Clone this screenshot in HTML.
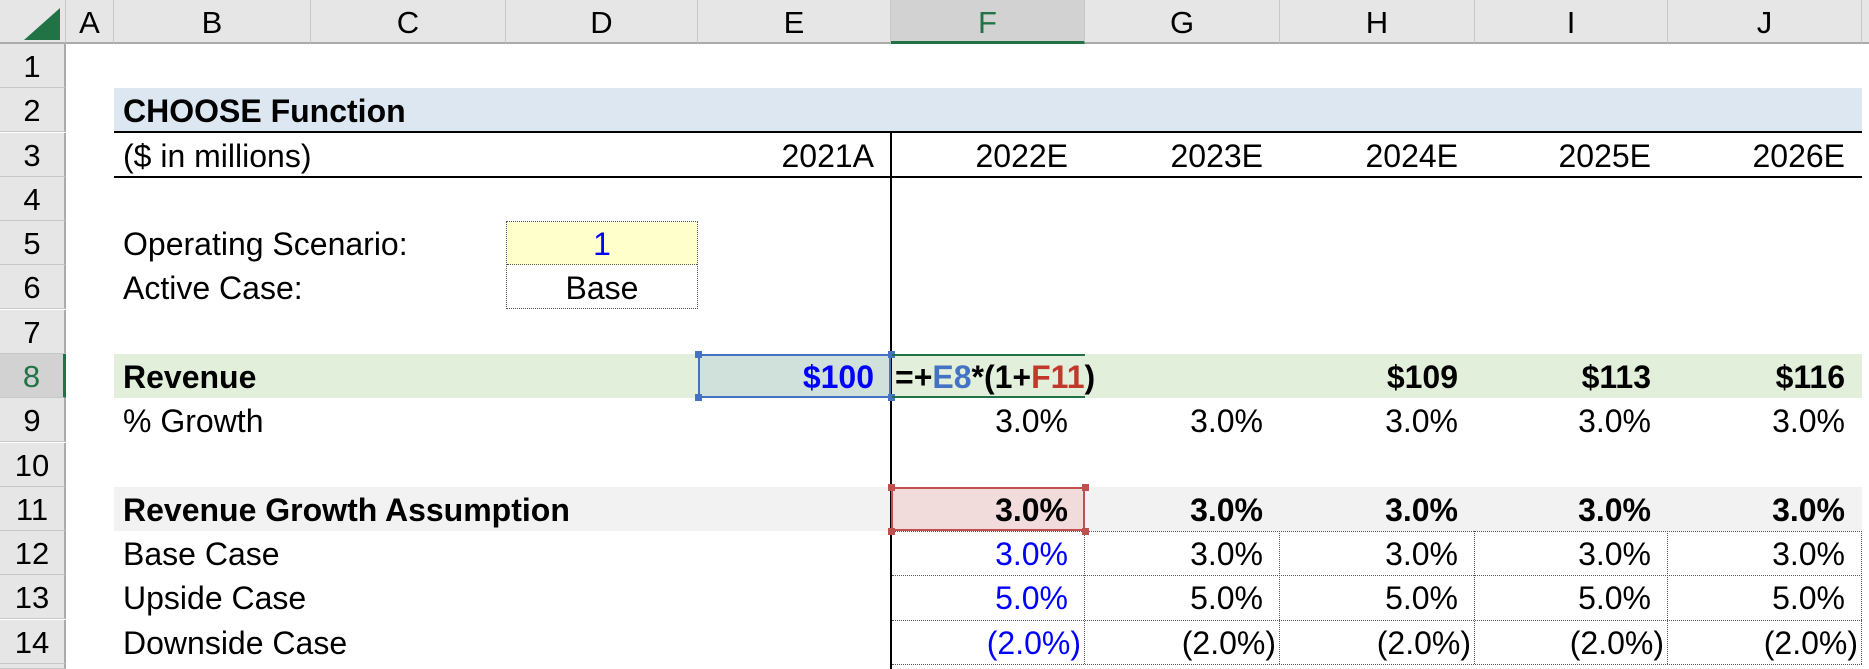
<!DOCTYPE html>
<html><head><meta charset="utf-8"><style>
*{margin:0;padding:0;box-sizing:border-box}
html,body{width:1869px;height:669px;overflow:hidden}
body{background:#fff;position:relative;font-family:"Liberation Sans",Arial,sans-serif;color:#000}
.a{position:absolute}
.t{position:absolute;height:44px;line-height:47px;font-size:32px;white-space:nowrap;overflow:visible}
.r{text-align:right;padding-right:17px}
.rp{text-align:right;padding-right:4px}
.b{font-weight:bold}
.bl{color:#0000ff}
.hd{position:absolute;top:0;height:44px;line-height:46px;font-size:31px;text-align:center;background:#e6e6e6;border-right:1px solid #c8c8c8;border-bottom:2px solid #ababab}
.rh{position:absolute;left:0;width:66px;height:44px;line-height:46px;font-size:31px;text-align:center;background:#e6e6e6;border-bottom:1px solid #c8c8c8;border-right:2px solid #ababab}
.h{position:absolute;width:7px;height:7px}
</style></head><body>
<div class="hd" style="left:0;width:66px"></div>
<svg class="a" style="left:10px;top:6px" width="52" height="36"><polygon points="50,2 50,34 14,34" fill="#217346"/></svg>
<div class="hd" style="left:66px;width:48px">A</div>
<div class="hd" style="left:114px;width:197px">B</div>
<div class="hd" style="left:311px;width:195px">C</div>
<div class="hd" style="left:506px;width:192px">D</div>
<div class="hd" style="left:698px;width:193px">E</div>
<div class="hd" style="left:891px;width:194px;background:#d2d2d2;color:#217346;border-bottom:3px solid #217346">F</div>
<div class="hd" style="left:1085px;width:195px">G</div>
<div class="hd" style="left:1280px;width:195px">H</div>
<div class="hd" style="left:1475px;width:193px">I</div>
<div class="hd" style="left:1668px;width:194px">J</div>
<div class="hd" style="left:1862px;width:7px;border-right:none"></div>
<div class="rh" style="top:44px">1</div>
<div class="rh" style="top:88px">2</div>
<div class="rh" style="top:133px">3</div>
<div class="rh" style="top:177px">4</div>
<div class="rh" style="top:221px">5</div>
<div class="rh" style="top:265px">6</div>
<div class="rh" style="top:310px">7</div>
<div class="rh" style="top:354px;background:#d2d2d2;color:#217346;border-right:3px solid #217346">8</div>
<div class="rh" style="top:398px">9</div>
<div class="rh" style="top:443px">10</div>
<div class="rh" style="top:487px">11</div>
<div class="rh" style="top:531px">12</div>
<div class="rh" style="top:575px">13</div>
<div class="rh" style="top:620px">14</div>
<div class="rh" style="top:664px;height:5px"></div>

<div class="a" style="left:114px;top:88px;width:1748px;height:45px;background:#dde7f1;border-bottom:2px solid #000"></div>
<div class="a" style="left:114px;top:176px;width:1748px;height:2px;background:#000"></div>
<div class="a" style="left:114px;top:354px;width:1748px;height:44px;background:#e2efda"></div>
<div class="a" style="left:114px;top:487px;width:1748px;height:44px;background:#f2f2f2"></div>
<div class="a" style="left:890px;top:133px;width:2px;height:536px;background:#000"></div>

<div class="a" style="left:506px;top:221px;width:192px;height:88px;border:1px dotted #555"></div>
<div class="a" style="left:507px;top:222px;width:190px;height:43px;background:#ffffcc;border-bottom:1px dotted #555"></div>

<div class="a" style="left:892px;top:531px;width:970px;height:1px;border-top:1px dotted #555"></div>
<div class="a" style="left:892px;top:575px;width:970px;height:1px;border-top:1px dotted #555"></div>
<div class="a" style="left:892px;top:620px;width:970px;height:1px;border-top:1px dotted #555"></div>
<div class="a" style="left:892px;top:664px;width:970px;height:1px;border-top:1px dotted #555"></div>
<div class="a" style="left:1084px;top:531px;width:1px;height:133px;border-left:1px dotted #555"></div>
<div class="a" style="left:1279px;top:531px;width:1px;height:133px;border-left:1px dotted #555"></div>
<div class="a" style="left:1474px;top:531px;width:1px;height:133px;border-left:1px dotted #555"></div>
<div class="a" style="left:1667px;top:531px;width:1px;height:133px;border-left:1px dotted #555"></div>
<div class="a" style="left:1861px;top:531px;width:1px;height:133px;border-left:1px dotted #555"></div>

<div class="a" style="left:698px;top:354px;width:193px;height:44px;background:#d0e1dc;border:2px solid #4472c4"></div>
<div class="h" style="left:695px;top:351px;background:#4472c4"></div>
<div class="h" style="left:695px;top:394px;background:#4472c4"></div>
<div class="h" style="left:888px;top:351px;background:#4472c4"></div>
<div class="h" style="left:888px;top:394px;background:#4472c4"></div>
<div class="a" style="left:892px;top:354px;width:193px;height:44px;border-top:2px solid #217346;border-bottom:2px solid #217346"></div>
<div class="a" style="left:891px;top:487px;width:194px;height:44px;background:#f2dcdb;border:2px solid #c0504d"></div>
<div class="h" style="left:888px;top:484px;background:#c0504d"></div>
<div class="h" style="left:1082px;top:484px;background:#c0504d"></div>
<div class="h" style="left:888px;top:528px;background:#c0504d"></div>
<div class="h" style="left:1082px;top:528px;background:#c0504d"></div>

<div class="t b" style="left:123px;top:88px">CHOOSE Function</div>
<div class="t" style="left:123px;top:133px">($ in millions)</div>
<div class="t r" style="left:698px;top:133px;width:193px">2021A</div>
<div class="t r" style="left:891px;top:133px;width:194px">2022E</div>
<div class="t r" style="left:1085px;top:133px;width:195px">2023E</div>
<div class="t r" style="left:1280px;top:133px;width:195px">2024E</div>
<div class="t r" style="left:1475px;top:133px;width:193px">2025E</div>
<div class="t r" style="left:1668px;top:133px;width:194px">2026E</div>

<div class="t" style="left:123px;top:221px">Operating Scenario:</div>
<div class="t bl" style="left:506px;top:221px;width:192px;text-align:center">1</div>
<div class="t" style="left:123px;top:265px">Active Case:</div>
<div class="t" style="left:506px;top:265px;width:192px;text-align:center">Base</div>

<div class="t b" style="left:123px;top:354px">Revenue</div>
<div class="t r b bl" style="left:698px;top:354px;width:193px">$100</div>
<div class="t b" style="left:895px;top:354px">=+<span style="color:#4472c4">E8</span>*(1+<span style="color:#c0392b">F11</span>)</div>
<div class="t r b" style="left:1280px;top:354px;width:195px">$109</div>
<div class="t r b" style="left:1475px;top:354px;width:193px">$113</div>
<div class="t r b" style="left:1668px;top:354px;width:194px">$116</div>

<div class="t" style="left:123px;top:398px">% Growth</div>
<div class="t r" style="left:891px;top:398px;width:194px">3.0%</div>
<div class="t r" style="left:1085px;top:398px;width:195px">3.0%</div>
<div class="t r" style="left:1280px;top:398px;width:195px">3.0%</div>
<div class="t r" style="left:1475px;top:398px;width:193px">3.0%</div>
<div class="t r" style="left:1668px;top:398px;width:194px">3.0%</div>

<div class="t b" style="left:123px;top:487px">Revenue Growth Assumption</div>
<div class="t r b" style="left:891px;top:487px;width:194px">3.0%</div>
<div class="t r b" style="left:1085px;top:487px;width:195px">3.0%</div>
<div class="t r b" style="left:1280px;top:487px;width:195px">3.0%</div>
<div class="t r b" style="left:1475px;top:487px;width:193px">3.0%</div>
<div class="t r b" style="left:1668px;top:487px;width:194px">3.0%</div>

<div class="t" style="left:123px;top:531px">Base Case</div>
<div class="t r bl" style="left:891px;top:531px;width:194px">3.0%</div>
<div class="t r" style="left:1085px;top:531px;width:195px">3.0%</div>
<div class="t r" style="left:1280px;top:531px;width:195px">3.0%</div>
<div class="t r" style="left:1475px;top:531px;width:193px">3.0%</div>
<div class="t r" style="left:1668px;top:531px;width:194px">3.0%</div>

<div class="t" style="left:123px;top:575px">Upside Case</div>
<div class="t r bl" style="left:891px;top:575px;width:194px">5.0%</div>
<div class="t r" style="left:1085px;top:575px;width:195px">5.0%</div>
<div class="t r" style="left:1280px;top:575px;width:195px">5.0%</div>
<div class="t r" style="left:1475px;top:575px;width:193px">5.0%</div>
<div class="t r" style="left:1668px;top:575px;width:194px">5.0%</div>

<div class="t" style="left:123px;top:620px">Downside Case</div>
<div class="t rp bl" style="left:891px;top:620px;width:194px">(2.0%)</div>
<div class="t rp" style="left:1085px;top:620px;width:195px">(2.0%)</div>
<div class="t rp" style="left:1280px;top:620px;width:195px">(2.0%)</div>
<div class="t rp" style="left:1475px;top:620px;width:193px">(2.0%)</div>
<div class="t rp" style="left:1668px;top:620px;width:194px">(2.0%)</div>
</body></html>
